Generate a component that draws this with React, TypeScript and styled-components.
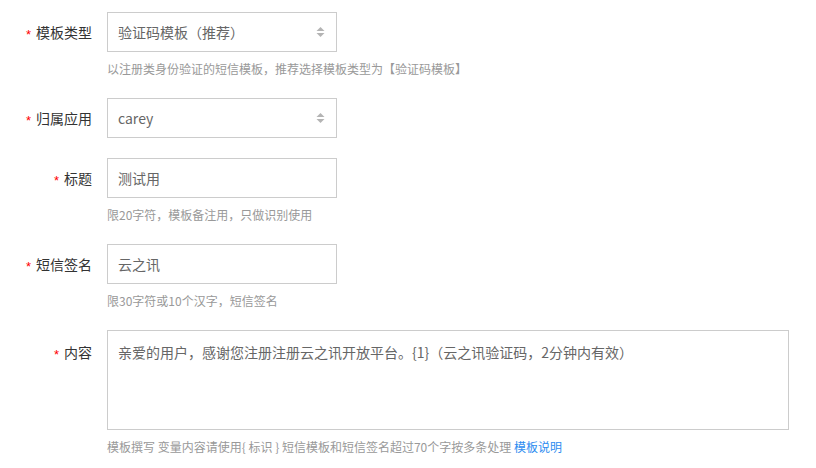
import styled, {createGlobalStyle} from "styled-components";

const GlobalStyle = createGlobalStyle`
  body {
    margin: 0;
    background: #fff;
    font-family: "Noto Sans CJK SC", "Noto Sans", sans-serif;
  }
`

interface IField {
    label: string
    value: string
    kind: 'select' | 'input' | 'textarea'
    help?: string
}

const fields: IField[] = [
    {label: '模板类型', value: '验证码模板（推荐）', kind: 'select', help: '以注册类身份验证的短信模板，推荐选择模板类型为【验证码模板】'},
    {label: '归属应用', value: 'carey', kind: 'select'},
    {label: '标题', value: '测试用', kind: 'input', help: '限20字符，模板备注用，只做识别使用'},
    {label: '短信签名', value: '云之讯', kind: 'input', help: '限30字符或10个汉字，短信签名'},
]

function SortArrows() {
    return (
        <svg width="9" height="12" viewBox="0 0 9 12">
            <path d="M4.5 1 L8.5 5 L0.5 5 Z" fill="#b4b4b4"/>
            <path d="M4.5 11 L8.5 7 L0.5 7 Z" fill="#b4b4b4"/>
        </svg>
    )
}

function App() {
    return (
        <Form>
            <GlobalStyle/>
            {fields.map((f) =>
                <Row key={f.label}>
                    <Label><Star>*</Star>{f.label}</Label>
                    <Control>
                        <Box>
                            <span>{f.value}</span>
                            {f.kind === 'select' && <SortArrows/>}
                        </Box>
                        {f.help && <Help>{f.help}</Help>}
                    </Control>
                </Row>
            )}
            <Row>
                <Label $top><Star>*</Star>内容</Label>
                <Control>
                    <TextArea>亲爱的用户，感谢您注册注册云之讯开放平台。{'{1}'}（云之讯验证码，2分钟内有效）</TextArea>
                    <Help>
                        模板撰写 变量内容请使用{'{'} 标识 {'}'} 短信模板和短信签名超过70个字按多条处理 <Link>模板说明</Link>
                    </Help>
                </Control>
            </Row>
        </Form>
    )
}

const Form = styled.div`
  display: flex;
  flex-direction: column;
  gap: 20px;
  padding-top: 12px;
`

const Row = styled.div`
  display: flex;
  gap: 15px;
`

const Label = styled.div<{$top?: boolean}>`
  width: 92px;
  height: ${(props) => props.$top ? '44px' : '40px'};
  display: flex;
  align-items: center;
  justify-content: flex-end;
  font-size: 14px;
  color: #333;
  flex-shrink: 0;
`

const Star = styled.span`
  color: #f00;
  font-family: "Liberation Sans", sans-serif;
  font-size: 13px;
  margin-right: 5px;
  margin-top: 4px;
`

const Control = styled.div`
  display: flex;
  flex-direction: column;
  gap: 8px;
`

const Box = styled.div`
  box-sizing: border-box;
  width: 230px;
  height: 40px;
  border: 1px solid #ccc;
  padding: 0 11px 0 10px;
  display: flex;
  align-items: center;
  justify-content: space-between;
  font-size: 14px;
  color: #666;
`

const TextArea = styled.div`
  box-sizing: border-box;
  width: 682px;
  height: 100px;
  border: 1px solid #ccc;
  padding: 11px 10px;
  font-size: 14px;
  line-height: 20px;
  color: #666;
`

const Help = styled.div`
  font-size: 12px;
  line-height: 18px;
  color: #999;
  white-space: nowrap;
`

const Link = styled.a`
  color: #2d8cf0;
  cursor: pointer;
`

export default App
